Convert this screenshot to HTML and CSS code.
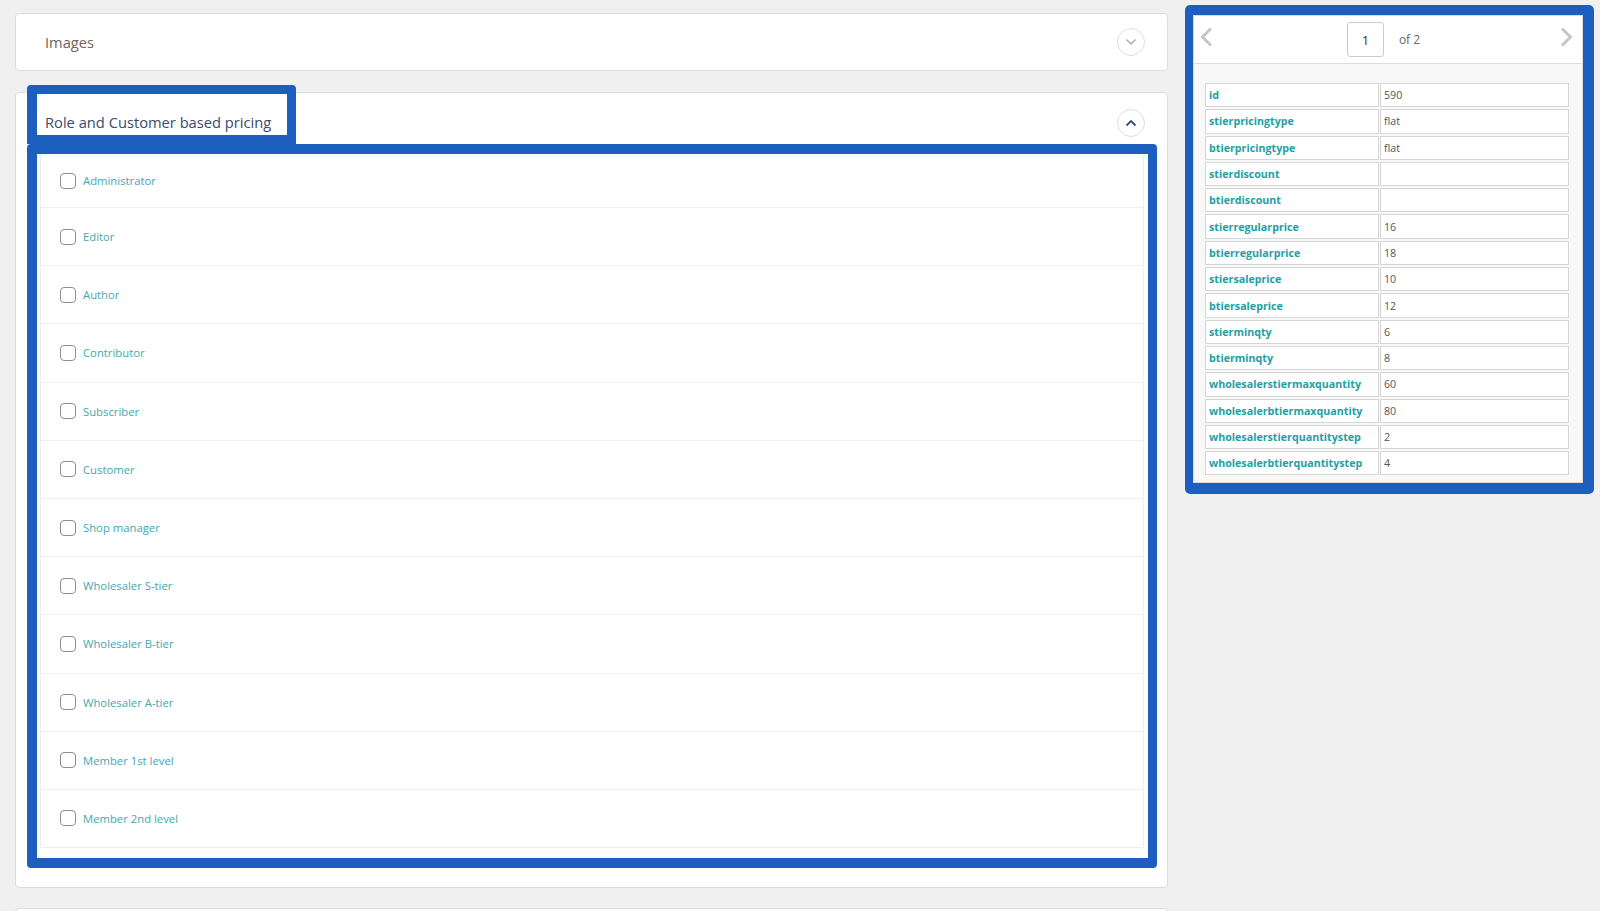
FILE: index.html
```html
<!DOCTYPE html>
<html lang="en">
<head>
    <meta charset="UTF-8">
    <meta name="viewport" content="width=device-width, initial-scale=1.0">
    <title>Role and Customer based pricing</title>
    <link rel="stylesheet" href="styles.css">
</head>
<body>

<div class="page">
    <div class="main">
        <div class="panel panel-images">
            <span class="panel-title">Images</span>
            <span class="toggle">
                <svg width="12" height="8" viewBox="0 0 12 8"><polyline points="1.5,1.5 6,6 10.5,1.5" fill="none" stroke="#a8a8a8" stroke-width="1.3"/></svg>
            </span>
        </div>

        <div class="panel panel-role">
            <div class="role-head">
                <div class="mark title-mark">
                    <span class="role-title">Role and Customer based pricing</span>
                </div>
                <span class="toggle toggle-open">
                    <svg width="12" height="8" viewBox="0 0 12 8"><polyline points="1.5,6.5 6,2 10.5,6.5" fill="none" stroke="#34488c" stroke-width="1.8"/></svg>
                </span>
            </div>

            <div class="mark list-mark">
                <ul class="roles">
                    <li><input type="checkbox" id="r1"><label for="r1">Administrator</label></li>
                    <li><input type="checkbox" id="r2"><label for="r2">Editor</label></li>
                    <li><input type="checkbox" id="r3"><label for="r3">Author</label></li>
                    <li><input type="checkbox" id="r4"><label for="r4">Contributor</label></li>
                    <li><input type="checkbox" id="r5"><label for="r5">Subscriber</label></li>
                    <li><input type="checkbox" id="r6"><label for="r6">Customer</label></li>
                    <li><input type="checkbox" id="r7"><label for="r7">Shop manager</label></li>
                    <li><input type="checkbox" id="r8"><label for="r8">Wholesaler S-tier</label></li>
                    <li><input type="checkbox" id="r9"><label for="r9">Wholesaler B-tier</label></li>
                    <li><input type="checkbox" id="r10"><label for="r10">Wholesaler A-tier</label></li>
                    <li><input type="checkbox" id="r11"><label for="r11">Member 1st level</label></li>
                    <li><input type="checkbox" id="r12"><label for="r12">Member 2nd level</label></li>
                </ul>
            </div>
        </div>

        <div class="panel panel-next"></div>
    </div>

    <div class="side mark">
        <div class="record">
            <div class="pager">
                <svg class="arrow" width="13" height="20" viewBox="0 0 13 20"><polyline points="11,1.5 2.5,10 11,18.5" fill="none" stroke="#c6c6c6" stroke-width="3"/></svg>
                <div class="page-select">
                    <span class="page-num">1</span>
                    <span class="page-of">of 2</span>
                </div>
                <svg class="arrow" width="13" height="20" viewBox="0 0 13 20"><polyline points="2,1.5 10.5,10 2,18.5" fill="none" stroke="#c6c6c6" stroke-width="3"/></svg>
            </div>
            <div class="record-body">
                <table class="fields">
                    <tr><td class="key">id</td><td>590</td></tr>
                    <tr><td class="key">stierpricingtype</td><td>flat</td></tr>
                    <tr><td class="key">btierpricingtype</td><td>flat</td></tr>
                    <tr><td class="key">stierdiscount</td><td></td></tr>
                    <tr><td class="key">btierdiscount</td><td></td></tr>
                    <tr><td class="key">stierregularprice</td><td>16</td></tr>
                    <tr><td class="key">btierregularprice</td><td>18</td></tr>
                    <tr><td class="key">stiersaleprice</td><td>10</td></tr>
                    <tr><td class="key">btiersaleprice</td><td>12</td></tr>
                    <tr><td class="key">stierminqty</td><td>6</td></tr>
                    <tr><td class="key">btierminqty</td><td>8</td></tr>
                    <tr><td class="key">wholesalerstiermaxquantity</td><td>60</td></tr>
                    <tr><td class="key">wholesalerbtiermaxquantity</td><td>80</td></tr>
                    <tr><td class="key">wholesalerstierquantitystep</td><td>2</td></tr>
                    <tr><td class="key">wholesalerbtierquantitystep</td><td>4</td></tr>
                </table>
            </div>
        </div>
    </div>
</div>

</body>
</html>
```

FILE: styles.css
```css
html, body {
    margin: 0;
    overflow: hidden;
}
body {
    font-family: "Open Sans", "Liberation Sans", sans-serif;
    background-color: #f0f0f0;
    color: #555;
}
.page {
    display: flex;
    align-items: flex-start;
    gap: 17px;
    height: 911px;
    box-sizing: border-box;
    overflow: hidden;
    padding: 5px 0 0 15px;
}
.main {
    width: 1153px;
    padding-top: 8px;
    display: flex;
    flex-direction: column;
}
.panel {
    background: white;
    border: 1px solid #dcdcdc;
    border-radius: 4px;
    box-sizing: border-box;
}
.mark {
    border: 9px solid #1d5fbf;
    border-radius: 4px;
}
.panel-images {
    height: 58px;
    display: flex;
    align-items: center;
    justify-content: space-between;
    padding: 0 22px 0 29px;
}
.panel-title, .role-title {
    font-size: 14.7px;
    line-height: 20px;
}
.panel-title {
    color: #6f645a;
}
.toggle {
    width: 26px;
    height: 26px;
    border: 1px solid #dedede;
    border-radius: 50%;
    display: flex;
    align-items: center;
    justify-content: center;
}
.panel-role {
    margin-top: 21px;
    display: flex;
    flex-direction: column;
}
.role-head {
    display: flex;
    margin: -8px 10px 0 11px;
}
.title-mark {
    border-left-width: 10px;
    border-radius: 4px 4px 0 0;
    width: 234px;
    padding: 17px 8px 2px 8px;
    background: white;
}
.role-title {
    color: #3b4a6b;
    white-space: nowrap;
}
.toggle-open {
    margin-left: auto;
    margin-right: 12px;
    margin-bottom: 7px;
    align-self: flex-end;
}
.list-mark {
    border-width: 10px 9px 10px 10px;
    margin: 0 10px 19px 11px;
    padding: 0 4px 10px 3px;
    background: white;
}
.roles {
    list-style: none;
    margin: 0;
    padding: 0;
    border: 1px solid #eeeeee;
    border-top: none;
}
.roles li {
    height: 58.2px;
    box-sizing: border-box;
    display: flex;
    align-items: center;
    padding-left: 19px;
    border-top: 1px solid #f0f0f0;
}
.roles li:first-child {
    height: 53px;
    border-top: none;
}
.roles input {
    appearance: none;
    width: 16px;
    height: 16px;
    margin: 0 7px 0 0;
    border: 1.5px solid #8f8f8f;
    border-radius: 4px;
    box-sizing: border-box;
    background: white;
}
.roles label {
    font-size: 11.3px;
    color: #3fa8b1;
}
.panel-next {
    margin-top: 20px;
    height: 4px;
    border-bottom: none;
    border-radius: 4px 4px 0 0;
}
.side {
    width: 409px;
    box-sizing: border-box;
    border-width: 10px 11px 11px 8px;
    border-radius: 5px;
}
.record {
    border: 1px solid #dcdcdc;
    background: #f8f8f8;
}
.pager {
    height: 47px;
    display: flex;
    align-items: center;
    justify-content: space-between;
    padding: 0 9px 0 6px;
    background: white;
    border-bottom: 1px solid #dddddd;
}
.pager .arrow {
    margin-top: -6px;
}
.page-select {
    display: flex;
    align-items: center;
}
.page-num {
    width: 35px;
    height: 33px;
    border: 1px solid #cccccc;
    border-radius: 3px;
    display: flex;
    align-items: center;
    justify-content: center;
    font-size: 13px;
    color: #333;
}
.page-of {
    margin-left: 15px;
    margin-right: 6px;
    font-size: 12px;
    color: #666;
}
.record-body {
    padding: 17px 12px 5px 10px;
}
.fields {
    width: 100%;
    border-collapse: separate;
    border-spacing: 1px 2px;
    font-size: 10.7px;
}
.fields td {
    height: 22.3px;
    padding: 0 3px;
    border: 1px solid #d6d6d6;
    background: white;
    color: #555;
}
.fields td.key {
    width: 166px;
    font-weight: bold;
    color: #23a0a4;
}
```
